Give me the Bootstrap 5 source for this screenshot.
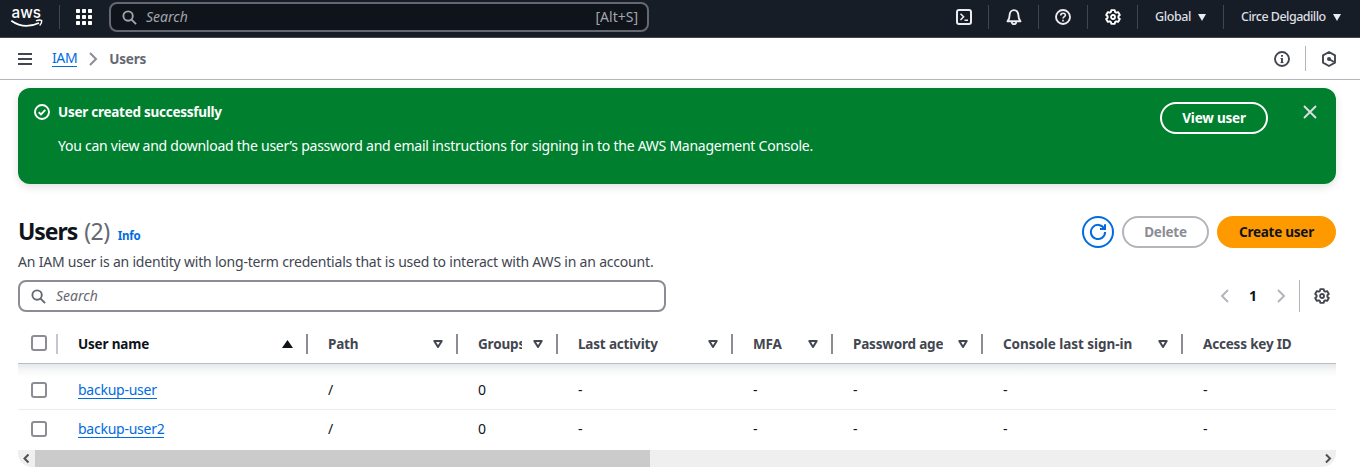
<!DOCTYPE html>
<html lang="en">
<head>
<meta charset="utf-8">
<meta name="viewport" content="width=device-width, initial-scale=1">
<title>Users | IAM</title>
<link href="https://cdn.jsdelivr.net/npm/bootstrap@5.3.0/dist/css/bootstrap.min.css" rel="stylesheet">
<style>
body{font-family:"Noto Sans","Open Sans",sans-serif;font-size:14px;letter-spacing:-.25px;line-height:20px;color:#0f141a;overflow:hidden;height:475px}
svg{display:block;flex:none}
.fw-bold,.users th{font-size:13.5px;letter-spacing:-.18px}
/* top navigation */
.topbar{height:38px;background:#161d26;border-bottom:1px solid #424650;color:#dedee3;padding-bottom:3px}
.logo-cell{width:60px}
.tick{border-right:1px solid #424650;height:24px}
.apps-cell{width:49px;padding-left:16px}
.top-search{width:540px;height:30px;background:#0f141a;border:2px solid #656871;border-radius:8px;padding:0 9px 0 11px;color:#a4a4ad}
.top-search em{margin-left:9px}
.w-a{width:50px}.w-b{width:49px}
.w-c{width:86px;padding-left:17px}.w-d{width:136px;padding-left:17px}
.topbar-text{font-size:12.500px;font-weight:500;letter-spacing:-.52px;white-space:nowrap}
.t-glob{letter-spacing:-.4px}
/* breadcrumbs */
.crumbs{height:42px;border-bottom:1px solid #b4b4bb;padding-left:17px;padding-right:23px}
.lnk{color:#006ce0;text-decoration:none;border-bottom:1px solid #006ce0;line-height:16px;display:inline-block}
.t-iam{margin-left:19px;letter-spacing:-.4px}
.t-chev{margin:0 8px}
.t-cu{color:#656871}
.vline{width:1px;background:#b4b4bb}
.h-icons{height:25px;margin:0 15px}
/* flash message */
.flash{margin:8px 24px 0 18px;height:96px;background:#00802f;border-radius:12px;color:#fff;padding:14px 18px 0 16px;box-shadow:0 3px 8px rgba(0,7,22,.12)}
.chk{margin-top:2px}
.t-ok{letter-spacing:-.26px}
.t-msg{margin-top:14px}
.close-x{margin:2px 0 0 34px}
.pill{height:32px;border-radius:16px;border:2px solid;font-size:13.500px;font-weight:700;line-height:20px;padding:0;white-space:nowrap;letter-spacing:-.2px}
.pill-view,.pill-view:hover{width:108px;color:#fff;border-color:#fff}
.pill-del{width:87px;color:#8c8c94;border-color:#b4b4bb}
.pill-new,.pill-new:hover{width:119px;background:#ff9900;border-color:#ff9900;color:#0f141a;letter-spacing:-.25px}
.pill-ref{width:32px;color:#006ce0;border-color:#006ce0}
/* users list */
.main-area{padding:0 24px 0 18px}
.head-row{margin-top:32px;height:36px}
.page-title{font-size:23px;font-weight:700;line-height:30px;margin:0;letter-spacing:-1.050px}
.count{font-weight:400;color:#656871;letter-spacing:-.5px;margin-left:2px}
.info{font-size:11.500px;font-weight:700;color:#006ce0;text-decoration:none;letter-spacing:-.2px}
.desc{height:28px;color:#424650;letter-spacing:-.2px}
.tools{height:32px}
.tbl-search{width:648px;height:32px;border:2px solid #8c8c94;border-radius:8px;padding:0 11px;color:#656871}
.tbl-search em{margin-left:10px}
.t-search{letter-spacing:0}
.pager{padding-right:6px}
.page-no{width:40px}
.v-pref{height:32px;margin:0 14px 0 10px}
.text-gear{color:#424650}
.users{table-layout:fixed;width:1318px;margin:13px 0 0;border-collapse:separate;border-spacing:0}
.users th,.users td{padding:0 0 0 20px;border:0;white-space:nowrap;background:transparent;vertical-align:middle}
.users th{height:39px;color:#424650;font-weight:700;border-bottom:1px solid #b9bec4}
.users th.sorted{color:#0f141a}
.users th:first-child,.users td:first-child{padding-left:13px}
.users td{height:40px;color:#0f141a;padding-bottom:2px}
.users tr.first-row td{height:46px;padding-top:7px;padding-bottom:0;border-bottom:1px solid #ebebf0;background:linear-gradient(#e6e8ea,#f5f6f7 6px,#fff 13px)}
.divd{width:2px;height:20px;background:#8c8c94;margin-left:13px;flex:none}
.divd-lt{background:#c6c6cd}
.cbx{width:16px;height:16px;border:2px solid #8c8c94;border-radius:3px;background:#fff;display:block;flex:none}
th .cbx{margin-top:-2px}
.clip{overflow:hidden}
.t-gr{width:44px}
.t-co{letter-spacing:-.05px}
.c0{width:40px}.c1{width:250px}.c2,.c6{width:150px}.c3,.c5{width:100px}.c4{width:175px}.c7{width:200px}.c8{width:153px}
.sbar{height:17px;background:#efefef;border-radius:0 0 14px 14px;overflow:hidden}
.thumb{width:615px;height:17px;background:#cbcbcb}
</style>
</head>
<body class="bg-white">
<svg width="0" height="0" class="d-none">
  <symbol id="gear" viewBox="0 0 16 16"><path d="M6.300 1.100h3.400l.4 1.900 1.100.7 1.900-.6 1.700 2.900L13.400 7.300v1.400l1.400 1.300-1.700 2.900-1.900-.6-1.100.7-.4 1.900H6.300L5.900 13l-1.100-.7-1.900.6L1.200 10l1.400-1.300V7.300L1.200 6l1.700-2.900 1.900.6L5.900 3z" fill="none" stroke="currentColor" stroke-width="1.900" stroke-linejoin="round"/><circle cx="8" cy="8" r="2" fill="none" stroke="currentColor" stroke-width="1.800"/></symbol>
  <symbol id="lens" viewBox="0 0 16 16"><circle cx="6.500" cy="6.500" r="5" fill="none" stroke="currentColor" stroke-width="2"/><path d="M10.200 10.200l4.800 4.800" stroke="currentColor" stroke-width="2"/></symbol>
  <symbol id="sort" viewBox="0 0 10 8"><path d="M1.300 1h7.400L5 7z" fill="none" stroke="#424650" stroke-width="2" stroke-linejoin="round"/></symbol>
</svg>

<nav class="topbar d-flex align-items-center">
  <div class="logo-cell tick d-flex align-items-center">
    <svg width="48" height="34" viewBox="0 0 48 34"><text x="11.500" y="17.500" font-family="Inter, sans-serif" font-size="16.500" font-weight="500" letter-spacing="0" fill="#fff" textLength="29.500" lengthAdjust="spacingAndGlyphs">aws</text><path d="M11.300 20.800c8.500 6 18.700 6.300 27.700 2.200" fill="none" stroke="#fff" stroke-width="1.700"/><path d="M36 20.900c2-1 4.300-1.200 5.700-.4.200 1.700-.6 3.700-2 5" fill="none" stroke="#fff" stroke-width="1.400"/></svg>
  </div>
  <div class="apps-cell"><svg width="17" height="16" viewBox="0 0 17 16" fill="#fff"><g id="dots"><rect width="4" height="4" rx=".7"/><rect x="6" width="4" height="4" rx=".7"/><rect x="12" width="4" height="4" rx=".7"/></g><use href="#dots" y="6"/><use href="#dots" y="12"/></svg></div>
  <div class="top-search d-flex align-items-center">
    <svg width="15" height="15"><use href="#lens"/></svg>
    <em class="t-search">Search</em><span class="ms-auto t-search">[Alt+S]</span>
  </div>
  <div class="ms-auto d-flex">
    <div class="w-a tick d-flex align-items-center justify-content-center"><svg width="16" height="16" fill="none" stroke="#ebebf0" stroke-width="2"><rect x="1" y="1" width="14" height="14" rx="2"/><path d="M4.500 4.700L7.600 7.800 4.500 11M8.500 11.300h3.500" stroke-width="1.600"/></svg></div>
    <div class="w-a tick d-flex align-items-center justify-content-center"><svg width="16" height="16" fill="none" stroke="#ebebf0" stroke-width="1.900"><path d="M1.500 12.300h13c-1.700-1.900-2.100-3.400-2.100-6C12.400 3.400 10.600 1.100 8 1.100S3.600 3.400 3.600 6.300c0 2.600-.4 4.100-2.100 6z" stroke-linejoin="round"/><path d="M5.800 13c.2 3 4.200 3 4.400 0"/></svg></div>
    <div class="w-b tick d-flex align-items-center justify-content-center"><svg width="16" height="16" fill="none" stroke="#ebebf0" stroke-width="1.900"><circle cx="8" cy="8" r="7"/><path d="M5.700 6.600C5.700 3.400 10.400 3.500 10.400 6.200 10.400 7.700 8 7.700 8 9.600M8 10.700v1.700" stroke-width="1.600"/></svg></div>
    <div class="w-a tick d-flex align-items-center justify-content-center text-white"><svg width="16" height="16"><use href="#gear"/></svg></div>
    <div class="w-c tick d-flex align-items-center topbar-text"><span class="t-glob">Global</span><svg class="ms-auto me-3" width="10" height="7"><path d="M1 0h8L5 7z" fill="#ebebf0"/></svg></div>
    <div class="w-d d-flex align-items-center topbar-text"><span>Circe Delgadillo</span><svg class="ms-auto me-3" width="12" height="7"><path d="M1 0h8L5 7z" fill="#ebebf0"/></svg></div>
  </div>
</nav>

<div class="crumbs d-flex align-items-center">
  <svg width="16" height="14" stroke="#424650" stroke-width="2"><path d="M1 2h14M1 7h14M1 12h14"/></svg>
  <a href="#" class="lnk t-iam">IAM</a>
  <svg width="16" height="14" class="t-chev" fill="none" stroke="#8c8c94" stroke-width="2"><path d="M5 1l6 6-6 6"/></svg>
  <span class="fw-bold t-cu">Users</span>
  <svg class="ms-auto" width="16" height="16" fill="none" stroke="#424650" stroke-width="1.900"><circle cx="8" cy="8" r="7"/><path d="M8 4v1.800M8 7v5"/><path d="M6.500 7.500H8M6.500 11.600h3" stroke-width="1"/></svg>
  <div class="vline h-icons"></div>
  <svg width="16" height="16" fill="none" stroke="#424650" stroke-width="1.900"><path d="M8 1l6 3.400v7.200L8 15l-6-3.400V4.400z" stroke-linejoin="round"/><circle cx="8" cy="8" r="2" fill="#424650" stroke="none"/><path d="M8 8l5 3"/></svg>
</div>

<section class="flash d-flex">
  <svg width="16" height="16" class="chk" fill="none" stroke="#fff" stroke-width="1.900"><circle cx="8" cy="8" r="7"/><path d="M4.700 8.200l2.300 2.200 4.300-4.600"/></svg>
  <div class="ms-2"><div class="fw-bold t-ok">User created successfully</div><div class="t-msg text-nowrap">You can view and download the user’s password and email instructions for signing in to the AWS Management Console.</div></div>
  <button class="btn pill pill-view ms-auto">View user</button>
  <svg width="16" height="16" class="close-x" stroke="#dedee3" stroke-width="1.900"><path d="M2 2l12 12M14 2L2 14"/></svg>
</section>

<main class="main-area">
  <header class="d-flex head-row">
    <div class="d-flex align-items-baseline"><h1 class="page-title">Users <span class="count">(2)</span></h1><a href="#" class="info ms-2">Info</a></div>
    <div class="ms-auto d-flex gap-2">
      <button class="btn pill pill-ref d-flex align-items-center justify-content-center"><svg width="18" height="18" viewBox="0 0 18 18" fill="none" stroke="#006ce0" stroke-width="2"><path d="M15.200 5.500A7.100 7.100 0 1 0 16.100 9M11 6h5V1.200"/></svg></button>
      <button class="btn pill pill-del">Delete</button>
      <button class="btn pill pill-new">Create user</button>
    </div>
  </header>
  <p class="desc mb-0">An IAM user is an identity with long-term credentials that is used to interact with AWS in an account.</p>
  <div class="d-flex align-items-center tools">
    <div class="tbl-search d-flex align-items-center"><svg width="15" height="15"><use href="#lens"/></svg><em class="t-search">Search</em></div>
    <div class="ms-auto d-flex align-items-center pager">
      <svg width="16" height="14" fill="none" stroke="#b4b4bb" stroke-width="2"><path d="M11 1L5 7l6 6"/></svg>
      <b class="text-center page-no">1</b>
      <svg width="16" height="14" fill="none" stroke="#b4b4bb" stroke-width="2"><path d="M5 1l6 6-6 6"/></svg>
      <div class="vline v-pref"></div>
      <svg width="16" height="16" class="text-gear"><use href="#gear"/></svg>
    </div>
  </div>
  <table class="table users">
    <colgroup><col class="c0"><col class="c1"><col class="c2"><col class="c3"><col class="c4"><col class="c5"><col class="c6"><col class="c7"><col class="c8"></colgroup>
    <thead><tr>
      <th><div class="d-flex align-items-center"><i class="cbx"></i><i class="divd divd-lt ms-auto"></i></div></th>
      <th class="sorted"><div class="d-flex align-items-center"><span class="clip">User name</span><svg class="ms-auto" width="11" height="8"><path d="M0 8h11L5.500 0z" fill="#0f141a"/></svg><i class="divd"></i></div></th>
      <th><div class="d-flex align-items-center"><span class="clip">Path</span><svg class="ms-auto" width="10" height="8"><use href="#sort"/></svg><i class="divd"></i></div></th>
      <th><div class="d-flex align-items-center"><span class="clip t-gr">Groups</span><svg class="ms-auto" width="10" height="8"><use href="#sort"/></svg><i class="divd"></i></div></th>
      <th><div class="d-flex align-items-center"><span class="clip">Last activity</span><svg class="ms-auto" width="10" height="8"><use href="#sort"/></svg><i class="divd"></i></div></th>
      <th><div class="d-flex align-items-center"><span class="clip">MFA</span><svg class="ms-auto" width="10" height="8"><use href="#sort"/></svg><i class="divd"></i></div></th>
      <th><div class="d-flex align-items-center"><span class="clip">Password age</span><svg class="ms-auto" width="10" height="8"><use href="#sort"/></svg><i class="divd"></i></div></th>
      <th><div class="d-flex align-items-center"><span class="clip t-co">Console last sign-in</span><svg class="ms-auto" width="10" height="8"><use href="#sort"/></svg><i class="divd"></i></div></th>
      <th>Access key ID</th>
    </tr></thead>
    <tbody>
      <tr class="first-row"><td><i class="cbx"></i></td><td><a href="#" class="lnk">backup-user</a></td><td>/</td><td>0</td><td>-</td><td>-</td><td>-</td><td>-</td><td>-</td></tr>
      <tr><td><i class="cbx"></i></td><td><a href="#" class="lnk">backup-user2</a></td><td>/</td><td>0</td><td>-</td><td>-</td><td>-</td><td>-</td><td>-</td></tr>
    </tbody>
  </table>
  <div class="sbar d-flex align-items-center">
    <svg width="17" height="17" fill="none" stroke="#505050" stroke-width="2"><path d="M10.500 4.500l-4 4 4 4"/></svg><div class="thumb"></div>
    <svg class="ms-auto" width="17" height="17" fill="none" stroke="#505050" stroke-width="2"><path d="M7 4.500l4 4-4 4"/></svg>
  </div>
</main>
<script src="https://cdn.jsdelivr.net/npm/bootstrap@5.3.0/dist/js/bootstrap.bundle.min.js"></script>
</body>
</html>
